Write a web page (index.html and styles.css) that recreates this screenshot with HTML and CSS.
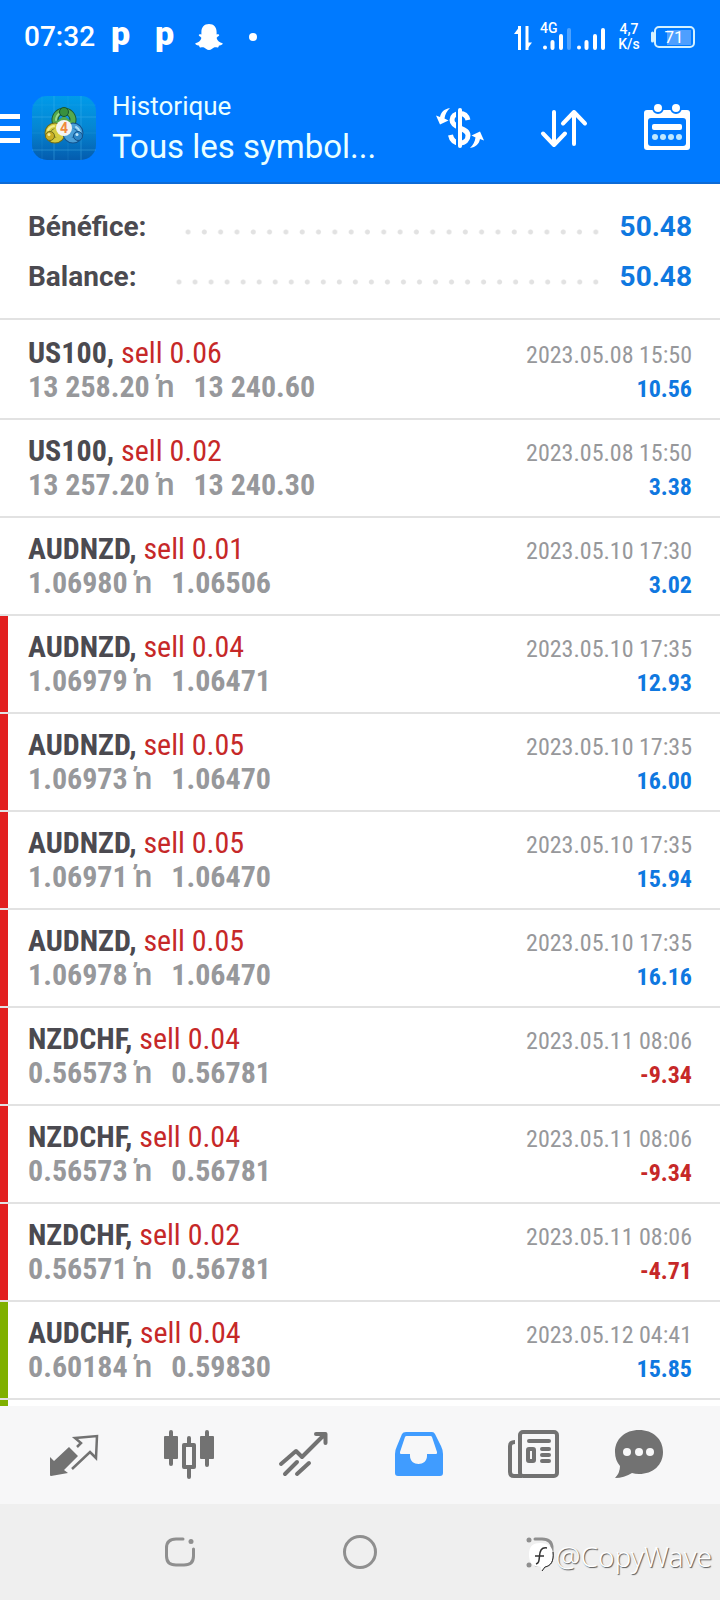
FILE: index.html
```html
<!DOCTYPE html>
<html lang="fr">
<head>
    <meta charset="UTF-8">
    <meta name="viewport" content="width=device-width, initial-scale=1.0">
    <title>Historique</title>
    <link rel="stylesheet" href="styles.css">
</head>
<body>
    <div class="app">
        <!-- Phone status bar -->
        <div class="status-bar">
            <div class="status-left">
                <span class="clock">07:32</span>
                <span class="status-p">p</span>
                <span class="status-p">p</span>
                <svg class="ghost" width="28" height="28" viewBox="0 0 28 28">
                    <path fill="#fff" d="M14 1c5 0 7.600 3.500 7.600 8v2.500c1-.5 2.800-.3 2.600.8-.2 1.200-2.400 1.500-2.600 2.700.8 3 3 4.500 6 5.300.5 1.700-2.600 1.900-3.600 2.300-.4.600-.2 1.600-1 1.800-1.300.2-2.700-.3-4 .2-1.600.9-2.800 2.400-5 2.400s-3.400-1.500-5-2.400c-1.300-.5-2.700 0-4-.2-.8-.2-.6-1.200-1-1.800-1-.4-4.100-.6-3.600-2.300 3-.8 5.200-2.300 6-5.300-.2-1.200-2.400-1.500-2.600-2.700-.2-1.100 1.600-1.300 2.600-.8V9c0-4.500 2.600-8 7.600-8z"/>
                </svg>
                <span class="status-dot"></span>
            </div>
            <div class="status-right">
                <svg width="94" height="38" viewBox="0 -4 94 38">
                    <g fill="none" stroke="#fff" stroke-width="3">
                        <path d="M5.500 28V4M13 4v24"/>
                    </g>
                    <path fill="#fff" d="M6 4v8H0zM12.500 28v-7.500H18z"/>
                    <g stroke="#fff" stroke-width="4" stroke-linecap="round">
                        <path d="M31 25.500v.1M38.500 20v6M47 14v12M65 25.500v.1M72.500 20v6M81 14v12M89 8v18"/>
                        <path opacity=".3" d="M55 8v18"/>
                    </g>
                    <text class="net-type" x="26" y="11">4G</text>
                </svg>
                <span class="speed">4,7<br>K/s</span>
                <svg width="46" height="24" viewBox="0 0 46 24">
                    <rect x="17" y="5" width="24" height="15" fill="#4d9fff"/>
                    <rect x="5" y="2" width="39" height="20" rx="4" fill="none" stroke="#d4f1ff" stroke-width="2"/>
                    <path d="M2.500 8v8" stroke="#d4f1ff" stroke-width="3" stroke-linecap="round"/>
                    <text class="battery" x="24" y="18">71</text>
                </svg>
            </div>
        </div>

        <header class="header">
            <button class="menu" aria-label="Menu">
                <svg width="20" height="30" viewBox="0 0 20 30">
                    <path fill="#fff" d="M0 1h20v5H0zM0 13h20v5H0zM0 25h20v5H0z"/>
                </svg>
            </button>
            <svg class="logo" width="64" height="64" viewBox="0 0 64 64">
                <defs>
                    <linearGradient id="sky" x1="0" y1="0" x2="0" y2="1">
                        <stop offset="0" stop-color="#009bea"/>
                        <stop offset=".5" stop-color="#0586d2"/>
                        <stop offset="1" stop-color="#045cae"/>
                    </linearGradient>
                </defs>
                <rect width="64" height="64" rx="15" fill="url(#sky)"/>
                <path d="M22 0v64M49 0v64M0 21h64M0 54h64" stroke="#4cb9ee" stroke-width="1" opacity=".4"/>
                <path d="M10 0v64M36 0v64M0 9h64M0 37h64" stroke="#4cb9ee" stroke-width="1" opacity=".15"/>
                <g fill="none" stroke-linecap="round">
                    <circle cx="32" cy="24" r="9" stroke="#1d5a35" stroke-width="7"/>
                    <circle cx="32" cy="24" r="9" stroke="#55aa4e" stroke-width="5"/>
                    <circle cx="23" cy="37" r="7" stroke="#6b6a1c" stroke-width="7"/>
                    <circle cx="23" cy="37" r="7" stroke="#d4cb3f" stroke-width="5"/>
                    <circle cx="41" cy="37" r="7" stroke="#13518c" stroke-width="7"/>
                    <circle cx="41" cy="37" r="7" stroke="#4a9fd8" stroke-width="5"/>
                    <path fill="#55aa4e" stroke="none" d="M24 26l8-6 8 6-8 8z"/>
                    <path fill="#d4cb3f" stroke="none" d="M18 36l8-6 6 6-6 7z"/>
                    <path fill="#4a9fd8" stroke="none" d="M46 36l-8-6-6 6 6 7z"/>
                    <path d="M24 24a9 9 0 0 1 4-7" stroke="#9bd78c" stroke-width="2"/>
                    <path d="M16 34a8 8 0 0 1 6-4" stroke="#f1ec8a" stroke-width="2"/>
                    <path d="M44 31a8 8 0 0 1 4 5" stroke="#a8dcf7" stroke-width="2"/>
                </g>
                <circle cx="32" cy="16" r="4.500" fill="#38913f" stroke="#175632"/>
                <circle cx="18" cy="40" r="4.500" fill="#c9ae25" stroke="#6b6a1c"/>
                <circle cx="46" cy="40" r="4.500" fill="#2c86c8" stroke="#13518c"/>
                <circle cx="17" cy="38.500" r="1.500" fill="#f7ee9c"/>
                <circle cx="45" cy="38.500" r="1.500" fill="#bfe6fa"/>
                <circle cx="32" cy="32" r="8" fill="#f4f4f2"/>
                <text class="logo-num" x="32" y="37">4</text>
            </svg>
            <div class="titles">
                <div class="section">Historique</div>
                <h1>Tous les symbol...</h1>
            </div>
            <div class="actions">
                <button aria-label="Devise">
                    <svg width="52" height="52" viewBox="-2 -2 52 52">
                        <path d="M33 16c-1-4-4-6.500-8-6.500-5 0-8 3-8 6.500 0 4 3.500 6 8 8s8 3.500 8 7.500-3 7.500-8 7.500-8.500-3-9.500-8" fill="none" stroke="#fff" stroke-width="5"/>
                        <path fill="#007aff" d="M21 5h2v38h-2z"/>
                        <path d="M25 6v36" stroke="#fff" stroke-width="4" stroke-linecap="round"/>
                        <path id="swap" fill="#fff" d="M15 4C9 5 6 8 5 13l-4-1.500 4 9 8.500-4-4-2C10 10 12 7 15 4z"/>
                        <use href="#swap" transform="rotate(180 25 24)"/>
                    </svg>
                </button>
                <button aria-label="Trier">
                    <svg width="52" height="52" viewBox="-2 -2 52 52">
                        <path d="M15 8v32M4 29.500 15 41l11-11.500M35 40V8M24 19.500 35 8l11 11.500" fill="none" stroke="#fff" stroke-width="4" stroke-linecap="round" stroke-linejoin="round"/>
                    </svg>
                </button>
                <button aria-label="Période">
                    <svg width="52" height="52" viewBox="-2 -2 52 52">
                        <rect x="1" y="6" width="46" height="40" rx="3" fill="#fff"/>
                        <rect x="5" y="14" width="38" height="28" rx="3" fill="#007aff"/>
                        <g fill="#fff" stroke="#007aff" stroke-width="2">
                            <circle cx="15" cy="4" r="5"/>
                            <circle cx="33" cy="4" r="5"/>
                        </g>
                        <rect x="9" y="20" width="30" height="6" rx="2" fill="#fff"/>
                        <g fill="#bfe8ff">
                            <circle cx="12" cy="33" r="3"/>
                            <circle cx="20" cy="33" r="3"/>
                            <circle cx="28" cy="33" r="3"/>
                            <circle cx="36" cy="33" r="3"/>
                        </g>
                    </svg>
                </button>
            </div>
        </header>

        <main class="content">
            <section class="summary">
                <div class="total"><span>Bénéfice:</span><i class="dots"></i><b>50.48</b></div>
                <div class="total"><span>Balance:</span><i class="dots"></i><b>50.48</b></div>
            </section>

            <!-- Closed trades -->
            <ul class="deals">
                <li class="deal">
                    <div class="line"><span class="name"><b>US100,</b> sell 0.06</span><span class="date">2023.05.08 15:50</span></div>
                    <div class="line"><span class="price">13 258.20 <i>ŉ</i> 13 240.60</span><span class="profit">10.56</span></div>
                </li>
                <li class="deal">
                    <div class="line"><span class="name"><b>US100,</b> sell 0.02</span><span class="date">2023.05.08 15:50</span></div>
                    <div class="line"><span class="price">13 257.20 <i>ŉ</i> 13 240.30</span><span class="profit">3.38</span></div>
                </li>
                <li class="deal">
                    <div class="line"><span class="name"><b>AUDNZD,</b> sell 0.01</span><span class="date">2023.05.10 17:30</span></div>
                    <div class="line"><span class="price">1.06980 <i>ŉ</i> 1.06506</span><span class="profit">3.02</span></div>
                </li>
                <li class="deal sl">
                    <div class="line"><span class="name"><b>AUDNZD,</b> sell 0.04</span><span class="date">2023.05.10 17:35</span></div>
                    <div class="line"><span class="price">1.06979 <i>ŉ</i> 1.06471</span><span class="profit">12.93</span></div>
                </li>
                <li class="deal sl">
                    <div class="line"><span class="name"><b>AUDNZD,</b> sell 0.05</span><span class="date">2023.05.10 17:35</span></div>
                    <div class="line"><span class="price">1.06973 <i>ŉ</i> 1.06470</span><span class="profit">16.00</span></div>
                </li>
                <li class="deal sl">
                    <div class="line"><span class="name"><b>AUDNZD,</b> sell 0.05</span><span class="date">2023.05.10 17:35</span></div>
                    <div class="line"><span class="price">1.06971 <i>ŉ</i> 1.06470</span><span class="profit">15.94</span></div>
                </li>
                <li class="deal sl">
                    <div class="line"><span class="name"><b>AUDNZD,</b> sell 0.05</span><span class="date">2023.05.10 17:35</span></div>
                    <div class="line"><span class="price">1.06978 <i>ŉ</i> 1.06470</span><span class="profit">16.16</span></div>
                </li>
                <li class="deal sl">
                    <div class="line"><span class="name"><b>NZDCHF,</b> sell 0.04</span><span class="date">2023.05.11 08:06</span></div>
                    <div class="line"><span class="price">0.56573 <i>ŉ</i> 0.56781</span><span class="profit loss">-9.34</span></div>
                </li>
                <li class="deal sl">
                    <div class="line"><span class="name"><b>NZDCHF,</b> sell 0.04</span><span class="date">2023.05.11 08:06</span></div>
                    <div class="line"><span class="price">0.56573 <i>ŉ</i> 0.56781</span><span class="profit loss">-9.34</span></div>
                </li>
                <li class="deal sl">
                    <div class="line"><span class="name"><b>NZDCHF,</b> sell 0.02</span><span class="date">2023.05.11 08:06</span></div>
                    <div class="line"><span class="price">0.56571 <i>ŉ</i> 0.56781</span><span class="profit loss">-4.71</span></div>
                </li>
                <li class="deal tp">
                    <div class="line"><span class="name"><b>AUDCHF,</b> sell 0.04</span><span class="date">2023.05.12 04:41</span></div>
                    <div class="line"><span class="price">0.60184 <i>ŉ</i> 0.59830</span><span class="profit">15.85</span></div>
                </li>
                <li class="deal tp"></li>
            </ul>
        </main>

        <nav class="tabs">
            <button aria-label="Cotations">
                <svg width="60" height="60" viewBox="0 0 60 60">
                    <path fill="#727272" d="M6 32l4 4 15-14 9 9-14 14 4 3-17 3q-1 0-1-1z"/>
                    <path d="M33 22l4-4-6-5 22-2-1 22-6-6-18 17" fill="none" stroke="#727272" stroke-width="2.500"/>
                </svg>
            </button>
            <button aria-label="Graphiques">
                <svg width="60" height="60" viewBox="0 0 60 60">
                    <g fill="#727272">
                        <rect x="5" y="11" width="14" height="23" rx="1"/>
                        <rect x="41" y="11" width="14" height="23" rx="1"/>
                    </g>
                    <path d="M12 7v32M48 7v33M30 13v6M30 43v9" stroke="#727272" stroke-width="4" stroke-linecap="round"/>
                    <rect x="25" y="20" width="10" height="22" fill="none" stroke="#727272" stroke-width="4" stroke-linejoin="round"/>
                </svg>
            </button>
            <button aria-label="Trading">
                <svg width="60" height="60" viewBox="0 0 60 60">
                    <path d="M7 39l15-13 6 6L51 9M42 9h9.500v9M11 49l12-12M23 49l12-11" fill="none" stroke="#727272" stroke-width="4" stroke-linecap="round" stroke-linejoin="round"/>
                </svg>
            </button>
            <button aria-label="Historique">
                <svg width="60" height="60" viewBox="0 0 60 60">
                    <path fill="#409cff" fill-rule="evenodd" d="M17 7h26q2 0 3 2l6 12q2 4 2 8v19q0 3-3 3H9q-3 0-3-3V29q0-4 2-8l5-12q1-2 4-2zM17.500 11q-1 0-1.500 1l-5 15q-.5 2 1 2h9v2c0 5 4 8 8.500 8s8.500-3 8.500-8v-2h9q1.500 0 1-2l-5-15q-.5-1-1.500-1z"/>
                </svg>
            </button>
            <button aria-label="Nouvelles">
                <svg width="60" height="60" viewBox="0 0 60 60">
                    <g fill="none" stroke="#727272" stroke-width="4" stroke-linecap="round">
                        <rect x="16" y="7" width="37" height="44" rx="3"/>
                        <path d="M18 51H10q-4 0-4-4V21q0-4 5-4" stroke-linecap="butt"/>
                        <path d="M25 16h20M38 24h7M38 30h7M38 36h7"/>
                        <rect x="24" y="24" width="6" height="12" rx="1"/>
                    </g>
                </svg>
            </button>
            <button aria-label="Messages">
                <svg width="60" height="60" viewBox="0 0 60 60">
                    <path fill="#727272" d="M30 5c14 0 24 9 24 22s-10 22-24 22q-4 0-7-1-8 5-17 5 5-5 5-12-5-6-5-14C6 14 16 5 30 5z"/>
                    <g fill="#f7f7f8">
                        <circle cx="18" cy="27" r="4"/>
                        <circle cx="30" cy="27" r="4"/>
                        <circle cx="41" cy="27" r="4"/>
                    </g>
                </svg>
            </button>
        </nav>

        <!-- Phone navigation keys -->
        <div class="keys">
            <button aria-label="Récents">
                <svg width="40" height="40" viewBox="0 0 40 40">
                    <path d="M23 7h-7Q6.500 7 6.500 16v8q0 9 9.500 9h8q9.500 0 9.500-9v-7" fill="none" stroke="#8f8f8f" stroke-width="3" stroke-linecap="round"/>
                    <circle cx="31" cy="9.500" r="2.500" fill="#8f8f8f"/>
                </svg>
            </button>
            <button aria-label="Accueil">
                <svg width="40" height="40" viewBox="0 0 40 40">
                    <circle cx="20" cy="20" r="15.500" fill="none" stroke="#8f8f8f" stroke-width="3"/>
                </svg>
            </button>
            <button aria-label="Retour">
                <svg width="40" height="40" viewBox="0 0 40 40">
                    <path d="M15 7h7q10 0 10 9v8q0 9-8 9h-8" fill="none" stroke="#8f8f8f" stroke-width="3" stroke-linecap="round"/>
                    <circle cx="9" cy="8" r="2.500" fill="#8f8f8f"/>
                    <circle cx="9" cy="33" r="2.500" fill="#8f8f8f"/>
                </svg>
            </button>
            <div class="watermark">
                <svg width="28" height="32" viewBox="0 0 28 32">
                    <path fill="#fff" d="M12 3c9 0 13 4 13 12s-4 11-9 12l-3 3v-3C5 27 1 23 1 15S4 3 12 3z"/>
                    <path d="M25 12c1 9-2 14-8 15l-3 4" fill="none" stroke="#222" stroke-width="1"/>
                    <path d="M19 8c-6-1-7 3-7.500 8S11 23 8 24M7 16h9" fill="none" stroke="#333" stroke-width="1.500"/>
                </svg>
                <span>@CopyWave</span>
            </div>
        </div>
    </div>
</body>
</html>
```
FILE: styles.css
```css
* {
    box-sizing: border-box;
}
body {
    margin: 0;
    background-color: #fff;
    font-family: Roboto, "Liberation Sans", sans-serif;
}
h1, ul {
    margin: 0;
    padding: 0;
}
button {
    display: flex;
    justify-content: center;
    align-items: center;
    padding: 0;
    border: none;
    background: none;
    cursor: pointer;
}
svg {
    display: block;
    flex-shrink: 0;
}
.app {
    display: flex;
    flex-direction: column;
    height: 100vh;
}

/* Status bar */
.status-bar {
    display: flex;
    justify-content: space-between;
    align-items: center;
    height: 74px;
    flex-shrink: 0;
    padding: 0 24px;
    background-color: #007aff;
    color: #fff;
}
.status-left, .status-right {
    display: flex;
    align-items: center;
}
.clock {
    font-size: 28px;
    font-weight: 500;
    line-height: 32px;
    margin-right: 16px;
}
.status-p {
    width: 44px;
    font-size: 34px;
    font-weight: 900;
    line-height: 32px;
    padding-bottom: 8px;
}
.ghost {
    margin: 0 26px 0 -4px;
}
.status-dot {
    width: 8px;
    height: 8px;
    border-radius: 50%;
    background-color: #fff;
}
.net-type {
    fill: #fff;
    font-size: 14px;
    font-weight: 500;
}
.speed {
    width: 42px;
    font-size: 14px;
    font-weight: 500;
    line-height: 15px;
    text-align: center;
}
.battery {
    fill: #fff;
    font-size: 17px;
    text-anchor: middle;
}

/* Header */
.header {
    display: flex;
    align-items: center;
    height: 110px;
    flex-shrink: 0;
    padding-right: 27px;
    background-color: #007aff;
    border-bottom: 2px solid #0d6bd6;
    color: #eaffff;
}
.menu {
    margin-right: 12px;
}
.titles {
    flex: 1;
    min-width: 0;
    padding: 6px 0 0 16px;
}
.section {
    font-size: 26px;
    line-height: 32px;
}
h1 {
    overflow: hidden;
    font-size: 33px;
    font-weight: normal;
    line-height: 50px;
    white-space: nowrap;
    text-overflow: ellipsis;
}
.logo-num {
    fill: #f08a3c;
    font-size: 14px;
    font-weight: bold;
    text-anchor: middle;
}
.actions {
    display: flex;
    gap: 52px;
}

/* Totals */
.content {
    flex: 1;
    min-height: 0;
    overflow: hidden;
}
.summary {
    padding: 18px 28px 16px;
    border-bottom: 2px solid #e2e2e2;
}
.total {
    display: flex;
    align-items: center;
    font-size: 28px;
    font-weight: bold;
    line-height: 50px;
    color: #4b4a50;
}
.total b {
    font-weight: bold;
    color: #0f78e0;
}
.dots {
    flex: 1;
    height: 6px;
    margin: 10px 16px 0 34px;
    background-image: radial-gradient(circle, #e2e2e2 2px, transparent 3px);
    background-size: 16px 6px;
    background-repeat: space no-repeat;
}

/* Deals list */
.deals {
    padding-top: 2px;
    list-style: none;
    font-family: "Roboto Condensed", Roboto, sans-serif;
}
.deal {
    position: relative;
    min-height: 98px;
    padding: 14px 28px;
    border-bottom: 2px solid #e2e2e2;
}
/* Closed by stop loss or take profit */
.sl::before, .tp::before {
    content: "";
    position: absolute;
    top: 0;
    bottom: 0;
    left: 0;
    width: 8px;
}
.sl::before {
    background-color: #e21f1f;
}
.tp::before {
    background-color: #7fb000;
}
.line {
    display: flex;
    justify-content: space-between;
    align-items: baseline;
    line-height: 34px;
    white-space: nowrap;
}
.name {
    font-size: 30px;
    color: #c62828;
}
.name b {
    color: #4b4a50;
}
.price {
    font-size: 30px;
    font-weight: bold;
    color: #97989b;
}
.price i {
    margin-right: 12px;
    font-family: Roboto, sans-serif;
    font-size: 32px;
    font-style: normal;
    font-weight: 500;
    line-height: 24px;
}
.date, .profit {
    font-size: 24px;
    line-height: 28px;
}
.date {
    color: #97989b;
}
.profit {
    font-weight: bold;
    color: #0f78e0;
}
.loss {
    color: #c62828;
}

/* Bottom tabs */
.tabs {
    display: grid;
    grid-template-columns: repeat(6, 1fr);
    height: 98px;
    flex-shrink: 0;
    padding: 0 13px 0 16px;
    background-color: #f7f7f8;
}
.tabs button:last-child {
    padding-right: 20px;
}
.keys {
    position: relative;
    display: grid;
    grid-template-columns: repeat(3, 1fr);
    height: 96px;
    flex-shrink: 0;
    padding: 0 12.5%;
    background-color: #efefef;
}
.watermark {
    position: absolute;
    right: 8px;
    bottom: 26px;
    display: flex;
    align-items: center;
    font-family: "Noto Sans", sans-serif;
    font-size: 28px;
    font-weight: 300;
    line-height: 36px;
    color: #fff;
    text-shadow: 1px 1px 1px #555;
}
```
